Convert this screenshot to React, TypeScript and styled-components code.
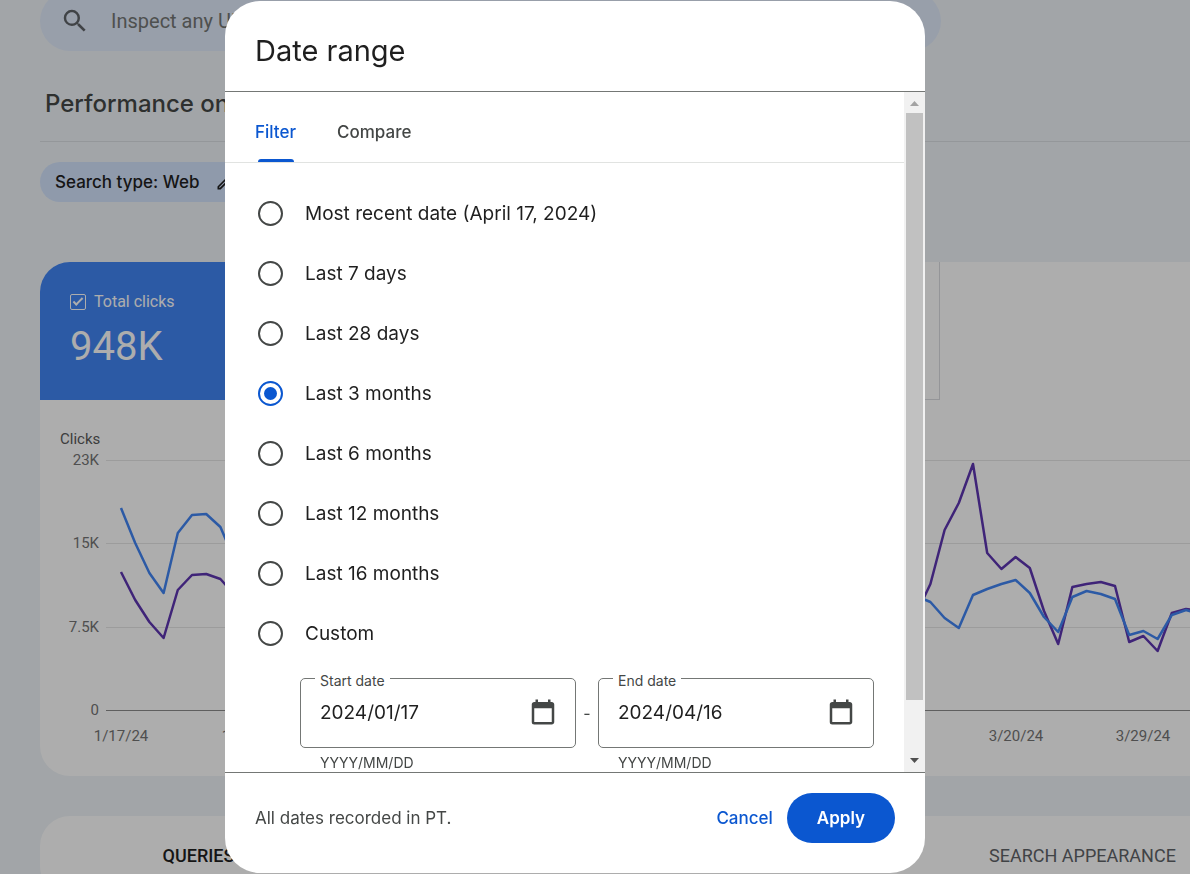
import React, { useState } from "react";
import styled, { createGlobalStyle } from "styled-components";

const sans = `"Google Sans", Inter, "Open Sans", sans-serif`;
const roboto = `Roboto, "Liberation Sans", sans-serif`;

const GlobalStyle = createGlobalStyle`
  *, *::before, *::after { box-sizing: border-box; }
  html, body { margin: 0; height: 100%; overflow: hidden; background: #eff4f8; }
  body { font-family: ${roboto}; color: #1f1f1f; }
  button, input { font: inherit; }
`;

/* ---------- Page behind the dialog ---------- */

const Page = styled.main`
  height: 100vh;
  overflow: hidden;
  padding-left: 40px;
`;

const SearchBar = styled.label`
  display: flex;
  align-items: center;
  gap: 21px;
  height: 60px;
  max-width: 901px;
  margin-top: -9px;
  padding: 0 20px;
  border-radius: 30px;
  background: #e1eafb;
  color: #5f6368;
`;

const SearchInput = styled.input`
  flex: 1;
  border: 0;
  padding: 0;
  background: transparent;
  font-size: 20px;
  outline: none;
  &::placeholder {
    color: #747775;
    opacity: 1;
  }
`;

const TitleRow = styled.header`
  display: flex;
  align-items: center;
  height: 91px;
  padding: 16px 5px 0;
  border-bottom: 1px solid #dadfe3;
  h1 {
    margin: 0;
    font: 500 24px/32px ${sans};
    color: #444746;
  }
`;

const ChipRow = styled.div`
  display: flex;
  padding: 20px 0 60px;
`;

const Chip = styled.button`
  display: flex;
  align-items: center;
  gap: 16px;
  height: 40px;
  padding: 0 15px;
  border: 0;
  border-radius: 20px;
  background: #d3e3fd;
  color: #1f1f1f;
  font: 500 17px/24px ${sans};
`;

const Card = styled.section`
  border-radius: 30px 0 0 30px;
  background: #fff;
  overflow: hidden;
  & + & {
    margin-top: 40px;
  }
`;

const Metrics = styled.div`
  display: grid;
  grid-template-columns: repeat(4, 225px);
`;

const Metric = styled.div<{ $color?: string }>`
  height: 138px;
  padding: 30px;
  border-right: 1px solid #dadce0;
  border-bottom: 1px solid #dadce0;
  ${(p) => p.$color && `background: ${p.$color}; color: #fff; border-color: ${p.$color};`}
`;

const MetricLabel = styled.label`
  display: flex;
  align-items: center;
  gap: 8px;
  font-size: 16px;
  line-height: 20px;
`;

const MetricCheck = styled.input`
  appearance: none;
  width: 16px;
  height: 16px;
  margin: 0;
  color: inherit;
  border: 1px solid currentColor;
  border-radius: 2px;
  display: grid;
  place-items: center;
  &:checked::after {
    content: "";
    width: 10px;
    height: 5px;
    margin-bottom: 3px;
    border: solid currentColor;
    border-width: 0 0 2px 2px;
    transform: rotate(-45deg);
  }
`;

const MetricValue = styled.div`
  margin-top: 11px;
  font-size: 40px;
  line-height: 48px;
`;

const ChartSvg = styled.svg`
  display: block;
  width: 100%;
  height: 376px;
  font-family: ${roboto};
  font-size: 15px;
  fill: #757575;
`;

const DimensionTabs = styled.div`
  display: flex;
  padding-left: 48px;
`;

const DimensionTab = styled.button<{ $active?: boolean }>`
  flex: 0 0 221px;
  height: 80px;
  padding: 0 0 2px;
  border: 0;
  background: transparent;
  font-size: 18px;
  font-weight: ${(p) => (p.$active ? 500 : 400)};
  color: ${(p) => (p.$active ? "#1f1f1f" : "#5f6368")};
`;

/* ---------- Dialog ---------- */

const Scrim = styled.div`
  position: fixed;
  inset: 0;
  display: flex;
  justify-content: center;
  padding: 1px 40px 1px 0;
  background: rgba(0, 0, 0, 0.32);
`;

const Dialog = styled.div`
  display: flex;
  flex-direction: column;
  width: 700px;
  max-width: 100%;
  border-radius: 35px;
  background: #fff;
  overflow: hidden;
  font-family: ${sans};
`;

const DialogHeader = styled.header`
  flex: none;
  padding: 30px 30px 20px;
  border-bottom: 1px solid #747775;
  h2 {
    margin: 0;
    font-size: 29px;
    font-weight: 400;
    line-height: 40px;
  }
`;

const DialogBody = styled.div`
  flex: 1;
  min-height: 0;
  display: flex;
`;

const ScrollArea = styled.div`
  flex: 1;
  min-width: 0;
  overflow-y: auto;
  scrollbar-width: none;
`;

const Tabs = styled.div`
  display: flex;
  gap: 41px;
  padding: 0 30px;
  border-bottom: 1px solid #e1e3e1;
`;

const Tab = styled.button<{ $active?: boolean }>`
  display: flex;
  flex-direction: column;
  height: 70px;
  padding: 0;
  border: 0;
  background: transparent;
  font-size: 17px;
  font-weight: 500;
  line-height: 24px;
  color: ${(p) => (p.$active ? "#0b57d0" : "#444746")};
  span {
    margin: 28px 0 auto;
  }
  &::after {
    content: "";
    height: 3px;
    margin: 0 2px 0 3px;
    align-self: stretch;
    border-radius: 3px 3px 0 0;
    background: ${(p) => (p.$active ? "#0b57d0" : "transparent")};
  }
`;

const Options = styled.div`
  padding: 20px 30px 0;
`;

const Option = styled.label`
  display: flex;
  align-items: center;
  gap: 22px;
  height: 60px;
  padding-left: 3px;
  font-size: 19px;
`;

const Radio = styled.input`
  appearance: none;
  display: grid;
  place-items: center;
  width: 25px;
  height: 25px;
  margin: 0;
  border: 2px solid #444746;
  border-radius: 50%;
  &:checked {
    border-color: #0b57d0;
  }
  &:checked::after {
    content: "";
    width: 13px;
    height: 13px;
    border-radius: 50%;
    background: #0b57d0;
  }
`;

const DateRow = styled.div`
  display: grid;
  grid-template-columns: minmax(0, 1fr) 22px minmax(0, 1fr);
  padding: 15px 0 30px 45px;
`;

const Dash = styled.span`
  height: 70px;
  line-height: 70px;
  text-align: center;
  color: #444746;
`;

const Field = styled.div`
  position: relative;
  label {
    position: absolute;
    top: -7px;
    left: 15px;
    padding: 0 5px;
    background: #fff;
    font-size: 14px;
    line-height: 20px;
    color: #444746;
  }
`;

const FieldBox = styled.div`
  display: flex;
  align-items: center;
  height: 70px;
  padding: 0 17px 2px 19px;
  border: 1px solid #747775;
  border-radius: 5px;
  input {
    flex: 1;
    min-width: 0;
    border: 0;
    padding: 0;
    background: transparent;
    font-size: 19px;
    color: #1f1f1f;
    outline: none;
  }
`;

const IconButton = styled.button`
  display: flex;
  padding: 0;
  border: 0;
  background: transparent;
  color: #444746;
`;

const Hint = styled.div`
  padding: 5px 20px 0;
  font-size: 14px;
  line-height: 20px;
  color: #444746;
`;

const Scrollbar = styled.div`
  flex: none;
  display: flex;
  flex-direction: column;
  width: 21px;
  background: #f1f1f1;
`;

const ScrollArrow = styled.button<{ $down?: boolean }>`
  display: grid;
  place-items: center;
  height: 21px;
  padding: ${(p) => (p.$down ? "0 0 2px" : "2px 0 0")};
  border: 0;
  background: transparent;
  color: ${(p) => (p.$down ? "#505050" : "#a3a3a3")};
`;

const ScrollTrack = styled.div`
  flex: 1;
  padding: 0 2px;
  &::before {
    content: "";
    display: block;
    height: 92%;
    background: #c1c1c1;
  }
`;

const DialogFooter = styled.footer`
  flex: none;
  display: flex;
  align-items: center;
  gap: 14px;
  height: 101px;
  padding: 0 30px 10px;
  border-top: 1px solid #747775;
  p {
    margin: 0 auto 0 0;
    font-size: 17px;
    color: #444746;
  }
`;

const TextButton = styled.button`
  padding: 0;
  border: 0;
  background: transparent;
  font-size: 17px;
  font-weight: 500;
  color: #0b57d0;
`;

const PrimaryButton = styled.button`
  height: 50px;
  padding: 0 30px;
  border: 0;
  border-radius: 25px;
  background: #0b57d0;
  font-size: 17px;
  font-weight: 600;
  color: #fff;
`;

const SearchIcon = () => (
  <svg width="30" height="30" viewBox="0 0 24 24" fill="currentColor" aria-hidden="true">
    <path d="M15.5 14h-.79l-.28-.27A6.471 6.471 0 0 0 16 9.5 6.5 6.5 0 1 0 9.5 16c1.61 0 3.09-.59 4.23-1.57l.27.28v.79l5 4.99L20.49 19l-4.99-5zm-6 0C7.01 14 5 11.99 5 9.5S7.01 5 9.5 5 14 7.01 14 9.5 11.99 14 9.5 14z" />
  </svg>
);

const PencilIcon = () => (
  <svg width="20" height="20" viewBox="0 0 24 24" fill="currentColor" aria-hidden="true">
    <path d="M14.06 9.02l.92.92L5.92 19H5v-.92l9.06-9.06M17.66 3c-.25 0-.51.1-.7.29l-1.83 1.83 3.75 3.75 1.83-1.83a.996.996 0 0 0 0-1.41l-2.34-2.34c-.2-.2-.45-.29-.71-.29zm-3.6 3.19L3 17.25V21h3.75L17.81 9.94l-3.75-3.75z" />
  </svg>
);

const CalendarIcon = () => (
  <svg width="30" height="30" viewBox="0 0 24 24" fill="currentColor" aria-hidden="true">
    <path d="M19 4h-1V2h-2v2H8V2H6v2H5c-1.11 0-1.99.9-1.99 2L3 20a2 2 0 0 0 2 2h14c1.1 0 2-.9 2-2V6c0-1.1-.9-2-2-2zm0 16H5V9h14v11z" />
  </svg>
);

const DAY = 14.2;
const clicks = [
  108, 143, 173, 193, 133, 115, 114, 127, 160, 185, 205, 150, 140, 138, 150, 175, 200, 215, 160, 150, 148, 158,
  180, 205, 220, 165, 155, 150, 160, 185, 210, 225, 170, 160, 155, 165, 190, 212, 226, 172, 160, 156, 168, 190,
  214, 228, 175, 165, 160, 172, 192, 212, 224, 180, 170, 182, 196, 202, 218, 228, 195, 189, 184, 180, 193, 217,
  232, 197, 191, 194, 199, 235, 231, 239, 215, 210, 214,
];
const impressions = [
  172, 200, 222, 238, 190, 175, 174, 179, 195, 215, 236, 190, 180, 178, 186, 205, 225, 240, 195, 185, 182, 190,
  208, 228, 242, 198, 188, 184, 192, 210, 230, 244, 200, 190, 186, 195, 212, 232, 244, 202, 190, 186, 196, 214,
  234, 246, 204, 194, 190, 200, 218, 236, 246, 208, 198, 205, 214, 184, 130, 103, 64, 153, 169, 157, 168, 211,
  244, 187, 184, 182, 186, 242, 236, 251, 213, 209, 211,
];
const toPoints = (ys: number[]) => ys.map((y, i) => `${(81 + i * DAY).toFixed(1)},${y}`).join(" ");

const rows = [
  { y: 60, label: "23K" },
  { y: 143, label: "15K" },
  { y: 227, label: "7.5K" },
  { y: 310, label: "0" },
];
const days = ["1/17/24", "1/26/24", "2/4/24", "2/13/24", "2/22/24", "3/2/24", "3/11/24", "3/20/24", "3/29/24"];

const Chart = () => (
  <ChartSvg role="img" aria-label="Clicks and impressions over time">
    <text x="20" y="44" fill="#5a5a5a">Clicks</text>
    {rows.map((r) => (
      <React.Fragment key={r.label}>
        <text x="59" y={r.y + 5} textAnchor="end">{r.label}</text>
        <rect x="66" y={r.y} width="100%" height="1" fill={r.label === "0" ? "#8c8c8c" : "#e6e6e6"} />
      </React.Fragment>
    ))}
    {days.map((d, i) => (
      <text key={d} x={Math.round(81 + i * 9 * DAY)} y="341" textAnchor="middle">{d}</text>
    ))}
    <polyline points={toPoints(impressions)} fill="none" stroke="#5e35b1" strokeWidth="2.5" strokeLinejoin="round" />
    <polyline points={toPoints(clicks)} fill="none" stroke="#4285f4" strokeWidth="2.5" strokeLinejoin="round" />
  </ChartSvg>
);

const ranges = [
  "Most recent date (April 17, 2024)",
  "Last 7 days",
  "Last 28 days",
  "Last 3 months",
  "Last 6 months",
  "Last 12 months",
  "Last 16 months",
  "Custom",
];

const DateField = ({ id, label, initial }: { id: string; label: string; initial: string }) => (
  <Field>
    <FieldBox>
      <input id={id} defaultValue={initial} />
      <IconButton type="button" aria-label={`Pick ${label.toLowerCase()}`}>
        <CalendarIcon />
      </IconButton>
    </FieldBox>
    <label htmlFor={id}>{label}</label>
    <Hint>YYYY/MM/DD</Hint>
  </Field>
);

export default function App() {
  const [range, setRange] = useState("Last 3 months");
  return (
    <>
      <GlobalStyle />
      <Page>
        <SearchBar>
          <SearchIcon />
          <SearchInput aria-label="Inspect any URL" placeholder="Inspect any URL" />
        </SearchBar>
        <TitleRow>
          <h1>Performance on Search results</h1>
        </TitleRow>
        <ChipRow>
          <Chip type="button">
            Search type: Web
            <PencilIcon />
          </Chip>
        </ChipRow>
        <Card>
          <Metrics>
            <Metric $color="#4285f4">
              <MetricLabel>
                <MetricCheck type="checkbox" defaultChecked />
                Total clicks
              </MetricLabel>
              <MetricValue>948K</MetricValue>
            </Metric>
            <Metric $color="#5e35b1" />
            <Metric />
            <Metric />
          </Metrics>
          <Chart />
        </Card>
        <Card>
          <DimensionTabs>
            <DimensionTab type="button" $active>QUERIES</DimensionTab>
            <DimensionTab type="button">PAGES</DimensionTab>
            <DimensionTab type="button">COUNTRIES</DimensionTab>
            <DimensionTab type="button">DEVICES</DimensionTab>
            <DimensionTab type="button">SEARCH APPEARANCE</DimensionTab>
          </DimensionTabs>
        </Card>
      </Page>

      <Scrim>
        <Dialog role="dialog" aria-modal="true" aria-labelledby="dialog-title">
          <DialogHeader>
            <h2 id="dialog-title">Date range</h2>
          </DialogHeader>
          <DialogBody>
            <ScrollArea>
              <Tabs role="tablist">
                <Tab type="button" role="tab" aria-selected="true" $active><span>Filter</span></Tab>
                <Tab type="button" role="tab" aria-selected="false"><span>Compare</span></Tab>
              </Tabs>
              <Options role="radiogroup" aria-labelledby="dialog-title">
                {ranges.map((r) => (
                  <Option key={r}>
                    <Radio type="radio" name="range" checked={range === r} onChange={() => setRange(r)} />
                    {r}
                  </Option>
                ))}
                <DateRow>
                  <DateField id="start" label="Start date" initial="2024/01/17" />
                  <Dash>-</Dash>
                  <DateField id="end" label="End date" initial="2024/04/16" />
                </DateRow>
              </Options>
            </ScrollArea>
            <Scrollbar>
              <ScrollArrow type="button" aria-label="Scroll up">
                <svg width="9" height="5" fill="currentColor"><path d="M0 5 4.500 0 9 5z" /></svg>
              </ScrollArrow>
              <ScrollTrack />
              <ScrollArrow type="button" aria-label="Scroll down" $down>
                <svg width="9" height="5" fill="currentColor"><path d="M0 0h9L4.500 5z" /></svg>
              </ScrollArrow>
            </Scrollbar>
          </DialogBody>
          <DialogFooter>
            <p>All dates recorded in PT.</p>
            <TextButton type="button">Cancel</TextButton>
            <PrimaryButton type="button">Apply</PrimaryButton>
          </DialogFooter>
        </Dialog>
      </Scrim>
    </>
  );
}
